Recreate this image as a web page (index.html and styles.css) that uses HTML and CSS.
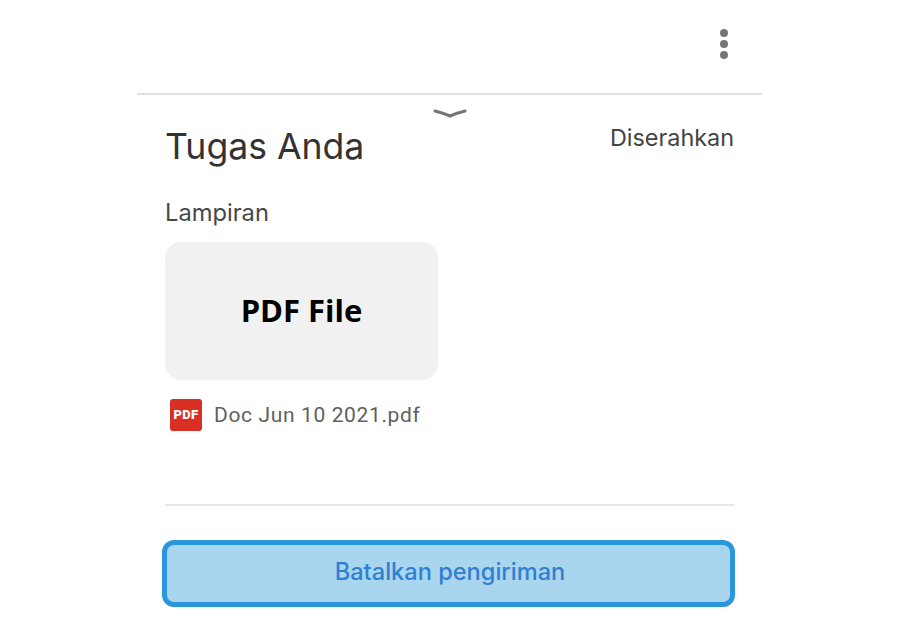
FILE: index.html
```html
<!DOCTYPE html>
<html lang="id">
<head>
    <meta charset="utf-8" />
    <title>Tugas Anda</title>
    <link rel="stylesheet" href="styles.css">
</head>
<body>
    <div class="page">
        <div class="topbar">
            <div class="more"><span></span><span></span><span></span></div>
        </div>
        <div class="sheet">
            <svg class="handle" width="34" height="12" viewBox="0 0 34 12">
                <path d="M2 3 Q10 5 17 8 Q24 5 32 3" fill="none" stroke="#757575" stroke-width="3" stroke-linecap="round" stroke-linejoin="round" />
            </svg>
            <div class="head">
                <div class="title">Tugas Anda</div>
                <div class="status">Diserahkan</div>
            </div>
            <div class="label">Lampiran</div>
            <div class="thumb">PDF File</div>
            <div class="file">
                <div class="pdf">PDF</div>
                <div class="name">Doc Jun 10 2021.pdf</div>
            </div>
            <div class="rule"></div>
            <div class="cancel">Batalkan pengiriman</div>
        </div>
    </div>
</body>
</html>
```

FILE: styles.css
```css
body {
    margin: 0;
    background: #fff;
    font-family: Inter, Roboto, "Liberation Sans", sans-serif;
}

.page {
    width: 625px;
    height: 635px;
    margin-left: 137px;
    overflow: hidden;
}

.topbar {
    height: 93px;
    border-bottom: 2px solid #e0e0e0;
    display: flex;
    justify-content: flex-end;
}

.more {
    display: flex;
    flex-direction: column;
    gap: 3px;
    margin: 29px 34px 0 0;
}

.more span {
    display: block;
    width: 8px;
    height: 8px;
    border-radius: 50%;
    background: #757575;
}

.sheet {
    position: relative;
    padding: 0 28px;
}

.handle {
    position: absolute;
    left: 296px;
    top: 13px;
}

.head {
    display: flex;
    justify-content: space-between;
    align-items: flex-start;
    padding-top: 30px;
}

.title {
    font-size: 35.6px;
    line-height: 44px;
    color: #333;
}

.status {
    font-size: 23.4px;
    line-height: 26px;
    color: #444;
}

.label {
    margin-top: 30px;
    font-size: 23.7px;
    line-height: 28px;
    color: #484848;
}

.thumb {
    width: 273px;
    height: 138px;
    margin-top: 15px;
    border-radius: 16px;
    background: #f1f1f1;
    display: flex;
    align-items: center;
    justify-content: center;
    padding-bottom: 2px;
    box-sizing: border-box;
    font-family: "Open Sans", sans-serif;
    font-weight: 700;
    font-size: 31px;
    color: #000;
}

.file {
    display: flex;
    align-items: center;
    margin-top: 19px;
    padding-left: 5px;
}

.pdf {
    width: 32px;
    height: 32px;
    border-radius: 3px;
    background: #d93025;
    color: #fff;
    font-family: Roboto, sans-serif;
    font-size: 13px;
    font-weight: 900;
    letter-spacing: 0.3px;
    text-align: center;
    line-height: 32px;
}

.name {
    margin-left: 12px;
    font-family: Roboto, sans-serif;
    font-size: 21px;
    letter-spacing: 0.63px;
    color: #5f5f5f;
}

.rule {
    height: 2px;
    margin-top: 73px;
    background: #e6e6e6;
}

.cancel {
    box-sizing: border-box;
    width: 573px;
    height: 67px;
    margin: 34px 0 0 -3px;
    padding: 0 0 5px 3px;
    border: 5px solid #2a96db;
    border-radius: 12px;
    background: #a9d5ef;
    color: #2f80d2;
    font-size: 23.6px;
    font-weight: 500;
    display: flex;
    align-items: center;
    justify-content: center;
}
```
